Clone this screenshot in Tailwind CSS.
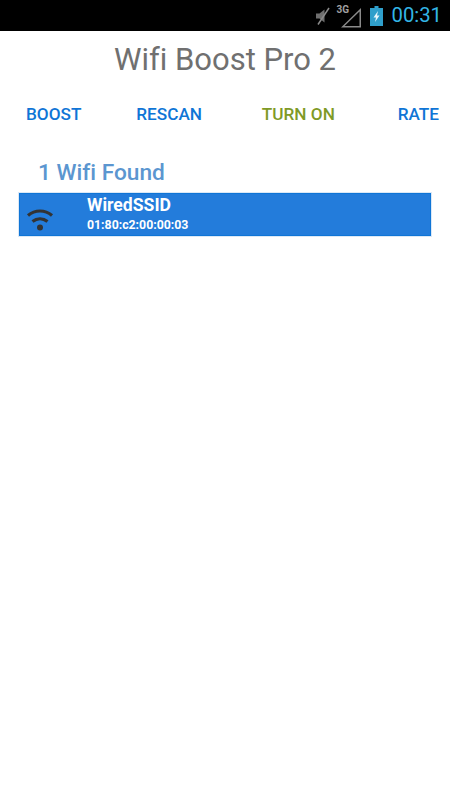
<!DOCTYPE html>
<html lang="en">

<head>
    <meta charset="UTF-8">
    <meta name="viewport" content="width=device-width, initial-scale=1.0">
    <title>Wifi Boost Pro 2</title>
    <script src="https://cdn.jsdelivr.net/npm/@tailwindcss/browser@4"></script>
</head>

<body class="bg-white font-['Roboto',sans-serif] [font-variant-ligatures:none]">
    <div class="w-[450px] h-[800px] overflow-hidden">
        <!-- status bar -->
        <div class="h-[31px] bg-black flex items-center justify-end">
            <svg class="w-[18px] h-[20px]" viewBox="0 0 18 20">
                <path d="M2 7.500h3.500L10.500 3.500v13L5.500 12.500H2z" fill="#6e6e6e" />
                <path d="M15 2L4 18.500" stroke="#8a8a8a" stroke-width="1.500" />
            </svg>
            <div class="relative w-[27px] h-[24px] ml-[4px]">
                <span class="absolute left-0 top-[-1px] text-[10px] leading-[14px] font-bold text-[#a0a0a0]">3G</span>
                <svg class="absolute left-[3px] top-0 w-[24px] h-[24px]" viewBox="0 0 24 24">
                    <path d="M2 23.500h20V4zM20.500 22H5.500L20.500 7.500z" fill="#8a8a8a" fill-rule="evenodd" />
                </svg>
            </div>
            <svg class="w-[13px] h-[20px] ml-[7px]" viewBox="0 0 13 20">
                <path d="M4.500 0h4v2h4.500v18H0V2h4.500z" fill="#2f9fcb" />
                <path d="M8 5L3.500 11.500H6L5 16l4.500-6.500H7z" fill="#e8f6fb" />
            </svg>
            <span class="text-[20.300px] leading-none text-[#33b5e5] ml-[8px] mr-[8px]">00:31</span>
        </div>

        <h1 class="text-[31px] leading-[36px] text-[#707070] text-center mt-[11px]">Wifi Boost Pro 2</h1>

        <div class="flex justify-between mt-[26px] pl-[26px] pr-[11px] text-[17.200px] leading-[20px] font-medium text-[#0f75d6]">
            <span>BOOST</span>
            <span class="ml-[-8px]">RESCAN</span>
            <span class="text-[#7f9a26] ml-[-3px]">TURN ON</span>
            <span>RATE</span>
        </div>

        <h2 class="text-[22.700px] leading-[28px] font-medium text-[#5b96d0] ml-[38px] mt-[35px]">1 Wifi Found</h2>

        <div class="mx-[19px] mt-[6px] h-[43px] bg-[#237cdb] border border-[#0f75d6] outline outline-[#dbe8f6] flex">
            <svg class="w-[28px] h-[26px] ml-[6px] mt-[12px]" viewBox="0 0 28 26">
                <path d="M2 9.500C9 3.500 19 3.500 26 9.500M6.500 15.500C11 12 17 12 21.500 15.500" fill="none" stroke="#333333" stroke-width="3.200" />
                <circle cx="14" cy="21.500" r="3" fill="#333333" />
            </svg>
            <div class="ml-[33px] text-white font-bold">
                <div class="text-[17.600px] leading-[20px] mt-[1px]">WiredSSID</div>
                <div class="text-[12.300px] leading-[16px] mt-[2px]">01:80:c2:00:00:03</div>
            </div>
        </div>
    </div>
</body>

</html>
